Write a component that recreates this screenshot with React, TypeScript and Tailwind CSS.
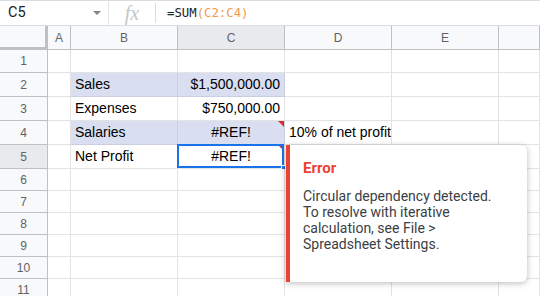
import React from "react";

const cols = ["A", "B", "C", "D", "E", ""];
const rowHeights = [23, 24, 24, 24, 24, 22, 22, 22, 22, 22, 22];

type Cell = { text?: string; align?: "left" | "right" | "center"; hl?: boolean; flag?: boolean };

const data: Record<string, Cell> = {
  B2: { text: "Sales", hl: true },
  C2: { text: "$1,500,000.00", align: "right", hl: true },
  B3: { text: "Expenses" },
  C3: { text: "$750,000.00", align: "right" },
  B4: { text: "Salaries", hl: true },
  C4: { text: "#REF!", align: "center", hl: true, flag: true },
  D4: { text: "10% of net profit" },
  B5: { text: "Net Profit" },
  C5: { text: "#REF!", align: "center", flag: true },
};

function FormulaBar() {
  return (
    <div className="flex h-[26px] items-center border-t border-b border-[#dadce0] bg-white">
      <div className="flex w-[108px] items-center justify-between pl-[8px] pr-[7px] text-[14.5px] text-[#202124]">
        <span>C5</span>
        <span className="h-0 w-0 border-x-[4px] border-t-[4px] border-x-transparent border-t-[#80868b]" />
      </div>
      <div className="h-[26px] w-px bg-[#e3e3e3]" />
      <div className="flex w-[46px] items-center justify-center font-['Liberation_Serif',serif] text-[20px] italic text-[#c4c7cb]">
        fx
      </div>
      <div className="h-[20px] w-px bg-[#dadce0]" />
      <div className="pl-[11px] pt-px font-['DejaVu_Sans_Mono',monospace] text-[12.3px] text-[#202124]">
        =SUM<span className="text-[#f09a4a]">(C2:C4)</span>
      </div>
    </div>
  );
}

function Sheet() {
  return (
    <div className="grid grid-cols-[48px_23px_107px_107px_107px_107px_1fr]">
      {/* header row */}
      <div className="h-[24px] border-r-[3px] border-b-[3px] border-[#c0c0c0] bg-[#f8f9fa]" />
      {cols.map((c, i) => (
        <div
          key={i}
          className={`flex h-[24px] items-center justify-center border-r border-b border-[#c0c0c0] text-[12px] text-[#5f6368] ${
            c === "C" ? "bg-[#e8eaed]" : "bg-[#f8f9fa]"
          }`}
        >
          {c}
        </div>
      ))}
      {rowHeights.map((h, r) => {
        const row = r + 1;
        return (
          <React.Fragment key={row}>
            <div
              style={{ height: h }}
              className={`flex items-center justify-center border-r border-b border-[#c0c0c0] text-[12px] text-[#5f6368] ${
                row === 5 ? "bg-[#e8eaed]" : "bg-[#f8f9fa]"
              }`}
            >
              {row}
            </div>
            {cols.map((c, i) => {
              const cell = data[`${c}${row}`];
              const sel = c === "C" && row === 5;
              return (
                <div
                  key={i}
                  style={{ height: h }}
                  className={`relative flex items-center border-r border-b px-[4px] text-[14px] text-black whitespace-nowrap ${
                    cell?.hl ? "bg-[#d9def1] border-[#c9cee0]" : "bg-white border-[#e2e3e3]"
                  } ${
                    cell?.align === "right" ? "justify-end" : cell?.align === "center" ? "justify-center" : "justify-start"
                  }`}
                >
                  {cell?.text}
                  {cell?.flag && (
                    <span className="absolute right-0 top-0 h-[6px] w-[6px] bg-[#d93025] [clip-path:polygon(0_0,100%_0,100%_100%)]" />
                  )}
                  {sel && (
                    <>
                      <span className="pointer-events-none absolute -left-px -top-px bottom-0 right-0 border-2 border-[#1a73e8]" />
                      <span className="absolute -bottom-[3px] -right-[3px] h-[6px] w-[6px] border border-white bg-[#1a73e8]" />
                    </>
                  )}
                </div>
              );
            })}
          </React.Fragment>
        );
      })}
    </div>
  );
}

function ErrorPopup() {
  return (
    <div className="absolute left-[286px] top-[145px] h-[137px] w-[241px] rounded-r-[6px] border-l-[4px] border-[#ea4335] bg-white pl-[13px] pt-[13px] shadow-[0_1px_5px_rgba(60,64,67,0.25),0_2px_8px_rgba(60,64,67,0.12)]">
      <div className="text-[15px] font-bold leading-[20px] text-[#ea4335]">Error</div>
      <div className="mt-[10px] w-[200px] text-[14px] leading-[16px] text-[#3c4043]">
        Circular dependency detected. To resolve with iterative calculation, see File &gt; Spreadsheet Settings.
      </div>
    </div>
  );
}

export default function App() {
  return (
    <div className="relative h-[296px] w-[540px] overflow-hidden bg-white font-['Roboto','Liberation_Sans',sans-serif]">
      <FormulaBar />
      <div className="font-['Liberation_Sans',Arial,sans-serif]">
        <Sheet />
      </div>
      <ErrorPopup />
    </div>
  );
}
